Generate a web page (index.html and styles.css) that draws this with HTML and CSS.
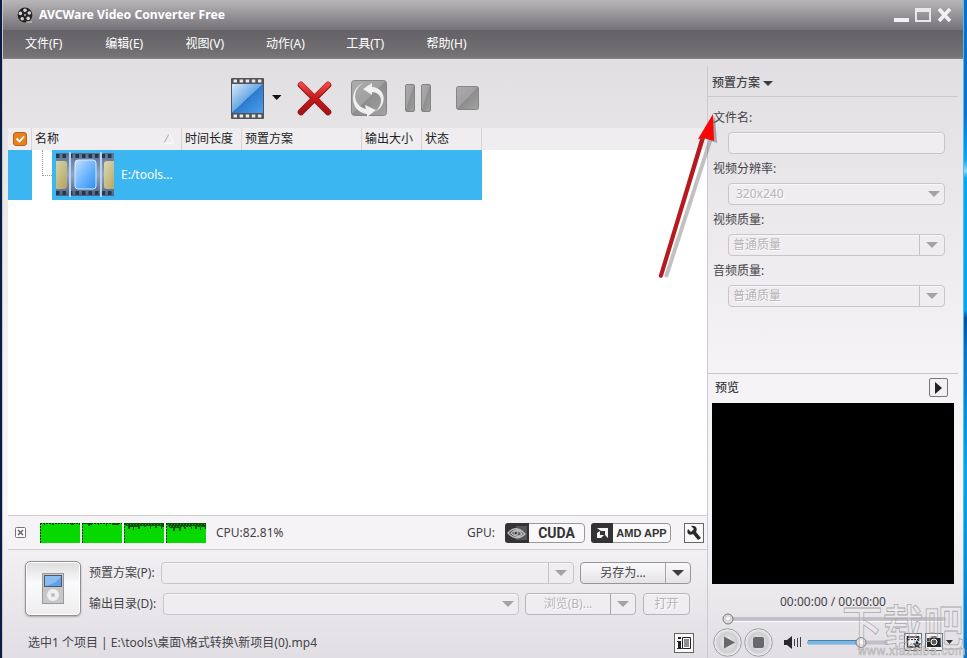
FILE: index.html
```html
<!DOCTYPE html>
<html lang="zh-CN">
<head>
<meta charset="utf-8">
<title>AVCWare Video Converter Free</title>
<link rel="stylesheet" href="styles.css">
</head>
<body>
<div class="window">
  <header class="titlebar">
    <svg class="logo" width="16" height="16" viewBox="0 0 16 16"><circle cx="8" cy="8" r="7.4" fill="#232323"/><g fill="#d4d4d4"><circle cx="8" cy="3.2" r="1.8"/><circle cx="12.3" cy="6" r="1.8"/><circle cx="11.2" cy="11.4" r="1.8"/><circle cx="5.2" cy="11.7" r="1.8"/><circle cx="3.4" cy="6.4" r="1.8"/></g><circle cx="8" cy="8" r="1.2" fill="#999"/><path d="M9 15h6" stroke="#ccc"/></svg>
    <h1>AVCWare Video Converter Free</h1>
    <svg class="winbtns" width="60" height="18" viewBox="0 0 60 18"><path fill="#f2f2f2" d="M1 12h15v4H1z"/><path d="M22 2h16v14H22zM24 6v8h12V6z" fill="#e9e9e9" fill-rule="evenodd"/><path d="M46 3l11 12M57 3L46 15" stroke="#f2f2f2" stroke-width="3.6"/></svg>
  </header>
  <nav class="menu"><span>文件(F)</span><span>编辑(E)</span><span>视图(V)</span><span>动作(A)</span><span>工具(T)</span><span>帮助(H)</span></nav>
  <div class="content">
    <main class="main">
      <div class="toolbar">
        <svg width="252" height="44" viewBox="0 0 252 44">
          <defs>
            <linearGradient id="film" x2="1" y2="1"><stop stop-color="#d6e9fa"/><stop offset=".49" stop-color="#6aa9e4"/><stop offset=".5" stop-color="#2c7ad0"/><stop offset="1" stop-color="#4da0ec"/></linearGradient>
            <linearGradient id="red" x2="0" y2="1"><stop stop-color="#ed4545"/><stop offset=".5" stop-color="#c41a1d"/><stop offset="1" stop-color="#a81417"/></linearGradient>
            <linearGradient id="grey" x2="1" y2="1"><stop stop-color="#acacad"/><stop offset=".49" stop-color="#a0a0a1"/><stop offset=".5" stop-color="#8d8d8e"/><stop offset="1" stop-color="#a3a3a4"/></linearGradient>
          </defs>
          <rect x="1" y="2" width="33" height="41" rx="1" fill="#515358"/>
          <rect x="2" y="8" width="31" height="29" fill="url(#film)"/>
          <path d="M3.5 5h29M3.5 40h29" stroke="#e8e8e8" stroke-width="3" stroke-dasharray="3.5 2.6"/>
          <path d="M42 19h9.500l-4.800 5z" fill="#111"/>
          <path d="M71 9l27 27M98 9L71 36" stroke="#8d1619" stroke-width="6.600" stroke-linecap="round"/>
          <path d="M71 8.500l27 27M98 8.500L71 35.500" stroke="url(#red)" stroke-width="5.200" stroke-linecap="round"/>
          <rect x="121.500" y="4.500" width="35" height="35" rx="3" fill="url(#grey)" stroke="#858586"/>
          <path d="M134 8C121 14 123 31 136 34l-1-4 11 5-9 7 0-3C119 37 119 12 134 8z" transform="translate(0 -1)" fill="#f0f0f2"/>
          <path d="M145 36c13-7 11-24-3-25v-4l-9 6 9 6v-3c11 1 12 12 3 20z" fill="#f0f0f2"/>
          <g fill="url(#grey)" stroke="#858586"><rect x="175.500" y="8.500" width="9" height="27" rx="1.500"/><rect x="191.500" y="8.500" width="9" height="27" rx="1.500"/><rect x="226.500" y="10.500" width="22" height="23" rx="2"/></g>
        </svg>
      </div>
      <div class="thead"><span class="c-check"><svg width="14" height="14" viewBox="0 0 14 14"><rect x=".5" y=".5" width="13" height="13" rx="2.500" fill="#e6811f" stroke="#bd6013"/><path d="M3.500 6.500l3 3 4.500-5" fill="none" stroke="#fff" stroke-width="1.800"/></svg></span><span class="c-name">名称<svg width="12" height="11" viewBox="0 0 12 11"><path d="M1 10L6 1" stroke="#aaa"/><path d="M6 1l5 9H1" fill="none" stroke="#fff"/></svg></span><span class="c-time">时间长度</span><span class="c-preset">预置方案</span><span class="c-size">输出大小</span><span class="c-state">状态</span></div>
      <div class="list">
        <div class="row">
          <div class="mark"></div><div class="tree"><i></i></div>
          <div class="item">
            <svg width="58" height="45" viewBox="0 0 58 45">
              <defs><linearGradient id="strip" x2="0" y2="1"><stop stop-color="#596e8e"/><stop offset=".5" stop-color="#8ba9cc"/><stop offset="1" stop-color="#4b6284"/></linearGradient><linearGradient id="pane" x2="1" y2="1"><stop stop-color="#c6e1ff"/><stop offset=".5" stop-color="#70b6fc"/><stop offset="1" stop-color="#2b8ff3"/></linearGradient><linearGradient id="tan" x2="1" y2="1"><stop stop-color="#dad9b1"/><stop offset="1" stop-color="#b6a25b"/></linearGradient></defs>
              <path fill="url(#strip)" d="M0 1h58v43H0z"/>
              <path d="M0 4h58M0 41h58" stroke="#26354d" stroke-width="4" stroke-dasharray="3.500 3"/>
              <path d="M-3 9H8q3 0 3 3v22q0 3-3 3h-11z" fill="url(#tan)"/><path d="M61 9H51q-3 0-3 3v22q0 3 3 3h10z" fill="url(#tan)"/>
              <path d="M14 0v45M45 0v45" stroke="#bed1e7" stroke-width="2"/>
              <rect x="19" y="8" width="21" height="29" rx="3" fill="url(#pane)" stroke="#d7eaff"/>
            </svg>
            <span>E:/tools...</span>
          </div>
        </div>
      </div>
      <div class="cpu">
        <svg class="closebox" width="11" height="11" viewBox="0 0 11 11"><rect x=".5" y=".5" width="10" height="10" rx="1" fill="#fafafa" stroke="#777"/><path d="M3 3l5 5M8 3L3 8" stroke="#666" stroke-width="1.500"/></svg>
        <svg class="graphs" width="166" height="20" viewBox="0 0 166 20">
          <defs><g id="tile"><rect width="40" height="20" fill="#06d900"/><path d="M.5 0v20" stroke="#073907" stroke-dasharray="2 1"/><path d="M0 .5h40" stroke="#063b05" stroke-dasharray="2 1"/></g></defs>
          <use href="#tile"/><use href="#tile" x="42"/><use href="#tile" x="84"/><use href="#tile" x="126"/>
          <path fill="#075007" d="M4 0v2h1V0zM12 0v2h2V0zM31 0v2h3V0zM39 0v2h1V0zM42 0h10v2h-2v1h-2V1h-6zM58 0v2h1V0zM66 0v3h1V0zM72 0v2h7V0zM84 0h40v4h-2v2h-1V3h-4v2h-2V3h-4v3h-1V3h-4v1h-2V3h-4v3h-2V4h-4v3h-1V4h-3v2h-2V3h-2zM126 0h40v6h-1V4h-4v3h-1V4h-3v2h-2V3h-3v3h-1V4h-5v2h-2V4h-3v4h-2V5h-4v3h-2V5h-3z"/>
          <path d="M87 1.500h36M128 1.500h37M127 3.500h36" stroke="#05ac02" stroke-dasharray="1 2"/>
        </svg>
        <span class="cputext">CPU:82.81%</span><span class="gpu">GPU:</span>
        <span class="badge cuda"><svg width="24" height="20" viewBox="0 0 24 20"><path d="M3 0h21v20H3q-3 0-3-3V3q0-3 3-3z" fill="#333335"/><path d="M11 3h11v14H11z" fill="#555558"/><path d="M3 10q8-9 17 1-8 8-17-1zM6 10q6-6 11 1-5 5-11-1z" fill="none" stroke="#bbb" stroke-width="1.300"/><circle cx="11" cy="10" r="2" fill="none" stroke="#ccc"/></svg><b>CUDA</b></span>
        <span class="badge amd"><svg width="22" height="20" viewBox="0 0 22 20"><path d="M3 0h19v20H3q-3 0-3-3V3q0-3 3-3z" fill="#333335"/><path d="M6 5h11v10l-3-3V8h-4zM6 10l3-2v4h4l-3 3H6z" fill="#f5f5f5"/></svg><b>AMD APP</b></span>
        <span class="sq wrench"><svg width="18" height="18" viewBox="0 0 18 18"><path d="M6 2c5-1 7 3 5 6l5 6-3 2-5-6C4 12 1 9 3 5l3 3 3-3z" fill="#292929"/></svg></span>
      </div>
      <div class="output">
        <div class="device"><svg width="22" height="31" viewBox="0 0 22 31"><rect x=".5" y=".5" width="21" height="30" fill="#c5c7ca" stroke="#999"/><rect x="2.500" y="2.500" width="17" height="11" fill="#8abbf2" stroke="#4c596d"/><path d="M3 13q9-1 16-9v9z" fill="#60a1e8"/><circle cx="11" cy="22" r="6" fill="#f0f0f0"/><circle cx="11" cy="22" r="2" fill="#bbb"/></svg></div>
        <div class="fields">
          <div class="line"><label>预置方案(P):</label><div class="combo profile disabled"><span></span><em><i class="caret"></i></em></div><div class="btn saveas"><span>另存为...</span><em><i class="caret"></i></em></div></div>
          <div class="line"><label>输出目录(D):</label><div class="combo dest disabled"><span></span><i class="caret"></i></div><div class="btn browse disabled"><span>浏览(B)...</span><em><i class="caret"></i></em></div><div class="btn open disabled"><span>打开</span></div></div>
        </div>
      </div>
      <footer class="status"><span>选中1 个项目 | E:\tools\桌面\格式转换\新项目(0).mp4</span><b class="sq"><svg width="18" height="18" viewBox="0 0 18 18"><path d="M3 3h3v2H3zM2 7h4v7h1v1H2v-1h1V8H2z" fill="#222"/><path d="M7.500 3.500h8v11h-8zM9 6h5M9 8h5M9 10h5M9 12h5" fill="none" stroke="#222"/></svg></b></footer>
    </main>
    <aside class="side">
      <section class="preset">
        <h2>预置方案<i class="caret"></i></h2>
        <label>文件名:</label><div class="combo"></div>
        <label>视频分辨率:</label><div class="combo disabled res"><span>320x240</span><i class="caret"></i></div>
        <label>视频质量:</label><div class="combo disabled"><span>普通质量</span><em><i class="caret"></i></em></div>
        <label>音频质量:</label><div class="combo disabled"><span>普通质量</span><em><i class="caret"></i></em></div>
      </section>
      <section class="preview">
        <h2>预览<b><svg width="7" height="12" viewBox="0 0 7 12"><path d="M0 0l7 6-7 6z" fill="#222"/></svg></b></h2>
        <div class="screen"></div>
        <div class="time">00:00:00 / 00:00:00</div>
        <svg class="player" width="255" height="48" viewBox="0 0 255 48">
          <defs><radialGradient id="steel"><stop stop-color="#eee"/><stop offset=".7" stop-color="#cecdd0"/><stop offset="1" stop-color="#f3f3f4"/></radialGradient></defs>
          <path d="M20 9h216" stroke="#c2bfca" stroke-width="4" stroke-linecap="round"/><path d="M20 11.500h216" stroke="#fff"/>
          <circle cx="20" cy="9" r="5" fill="#ddd" stroke="#777"/><circle cx="20" cy="8.500" r="2.500" fill="#fafafa" stroke="#aaa" stroke-width=".5"/>
          <g fill="url(#steel)" stroke="#9d9da0"><circle cx="19.500" cy="32.500" r="13.800"/><circle cx="50.500" cy="32.500" r="13.800"/></g>
          <path d="M16 26.500l11 6-11 6z" fill="#68686c"/><rect x="45" y="27" width="11" height="11" rx="2" fill="#68686c"/>
          <path d="M76 30h3l5-4v13l-5-4h-3z" fill="#29292b"/><path d="M86.500 29v7M89.500 28v9M92.500 27v10" stroke="#444" stroke-width="1"/>
          <path d="M101 32.500h77" stroke="#c2bfca" stroke-width="4" stroke-linecap="round"/><path d="M101 32.500h52" stroke="#78b8e6" stroke-width="4" stroke-linecap="round"/><path d="M100 30.500h52" stroke="#507f9f"/>
          <circle cx="153" cy="32.500" r="5" fill="#ddd" stroke="#777"/><circle cx="153" cy="32" r="2.500" fill="#fafafa"/>
          <g fill="#f4f3f4" stroke="#69696b"><rect x="196.500" y="23.500" width="17" height="17"/><rect x="217.500" y="23.500" width="17" height="17"/></g>
          <path d="M199 27h12M199 37h7M199.500 26v12M210.500 26v5" stroke="#222" fill="none" stroke-width="1.500"/><path d="M200 29.500h10" stroke="#222" stroke-dasharray="2 1"/><path d="M209 30l1.500 3 3 .5-2.300 2 .8 3-3-1.500-3 1.500.8-3-2.300-2 3-.5z" fill="#222"/>
          <path d="M219 28h4l1-2h4l1 2h4v9h-14z" fill="#252525"/><circle cx="226" cy="32" r="3" fill="#555" stroke="#fff"/><path d="M238 30h7l-3.500 4z" fill="#333"/>
        </svg>
      </section>
    </aside>
  </div>
</div>
<div class="desktop-edge"></div>
<svg class="arrow" width="70" height="175" viewBox="0 0 70 175"><path d="M14 171L59 32" stroke="#777" opacity=".45" stroke-width="4"/><path d="M9 172q-3-1-2-3L49 30l4 2-42 138q-1 2-2 2z" fill="#b71a1e"/><path d="M61 9L45 32l7-1 11 4z" transform="translate(2 2)" fill="#666" opacity=".5"/><path d="M61 8L46 33l6-1 10 3z" fill="#fb0505"/></svg>
<svg class="watermark" width="130" height="60" viewBox="0 0 130 60"><text x="4" y="47" textLength="122" lengthAdjust="spacingAndGlyphs" class="mark-big">下载吧</text><text x="20" y="57" textLength="107" class="mark-url">www.xiazaiba.com</text></svg>
</body>
</html>
```
FILE: styles.css
```css
* { box-sizing: border-box; }
body { margin: 0; width: 967px; height: 658px; overflow: hidden; display: flex; position: relative; background: #071f43; font: 12px/16px "Noto Sans", "Noto Sans CJK SC", sans-serif; color: #444448; }
svg { display: block; flex: none; }
i, em { font-style: normal; }
h1, h2 { margin: 0; }
.window { width: 961px; margin-left: 2px; border-left: 1px solid #c7c8ca; display: flex; flex-direction: column; background: #f4f2f4; }
.desktop-edge { width: 4px; border-left: 1px solid #64b5df; background: linear-gradient(#0870cd 0 59px, #0874d5 115px, #06a8fa 160px, #8fdcff 171px, #06a6f7 178px 310px, #0452a1 318px, #0874cc 350px, #08a6ef 470px, #0977c6); }
.titlebar { height: 30px; display: flex; align-items: center; padding: 0 10px 0 14px; background: linear-gradient(#b8b6b9, #747276); color: #fff; }
.titlebar h1 { font: bold 12.2px/18px "Noto Sans"; margin-left: 6px; width: 210px; white-space: nowrap; }
.winbtns { margin-left: auto; }
.menu { height: 29px; padding-left: 22px; display: flex; align-items: center; background: linear-gradient(#656267, #706e71 75%, #777578); border-bottom: 1px solid #858386; color: #fff; }
.menu span { width: 80.3px; }
.content { display: flex; height: 599px; background: linear-gradient(#e1dfe2, #f4f2f5 50%, #f8f6f8 75%, #e1dfe3); }
.main { width: 704px; padding-left: 5px; display: flex; flex-direction: column; }
.toolbar { height: 69px; padding: 17px 0 0 222px; }
.thead { height: 22px; display: flex; background: #efedf0; color: #222; line-height: 21px; }
.thead span { border-right: 1px solid #dbd2d2; padding-left: 3px; white-space: nowrap; }
.thead .c-check { width: 24px; padding: 4px 0 0 5px; }
.c-name { width: 150px; display: flex; justify-content: space-between; padding-right: 6px; align-items: center; }
.c-time { width: 60px; }
.c-preset { width: 120px; }
.c-size { width: 60px; }
.c-state { width: 60px; }
.list { height: 366px; background: #fff; }
.row { display: flex; height: 50px; width: 474px; }
.mark { width: 24px; background: #3cb6f1; }
.tree { width: 20px; padding-left: 10px; }
.tree i { display: block; height: 26px; border: dotted #999; border-width: 0 0 1px 1px; }
.item { flex: 1; background: #3cb6f1; display: flex; align-items: center; padding-left: 4px; color: #fff; gap: 7px; }
.cpu { height: 35px; border: solid #cfcdd0; border-width: 1px 0; display: flex; align-items: center; padding-left: 7px; background: #f5f3f5; }
.graphs { margin-left: 14px; }
.cputext { margin-left: 10px; width: 251px; }
.gpu { width: 38px; }
.badge { height: 20px; width: 80px; display: flex; border: 1px solid #98979a; border-radius: 4px; background: #faf9fa; }
.badge svg { margin: -1px 0 0 -1px; }
.badge b { flex: 1; text-align: center; font: bold 14px/19px Roboto; color: #333; }
.amd { margin-left: 6px; }
.amd b { font: bold 11px/18px "Liberation Sans"; white-space: nowrap; }
.sq { width: 20px; height: 20px; border: 1px solid #666; background: #fafafa; display: block; }
.wrench { margin-left: 13px; }
.output { height: 78px; padding: 11px 0 0 17px; display: flex; }
.device { width: 56px; height: 55px; border: 1px solid #8f8d91; border-radius: 5px; background: linear-gradient(#ddd, #fbfafc 40%, #eee); box-shadow: 0 1px 2px #aaa, inset 0 0 0 1px #fff; display: grid; place-items: center; }
.fields { margin-left: 8px; padding-top: 1px; }
.line { display: flex; height: 22px; margin-bottom: 9px; align-items: center; }
.line label { width: 72px; white-space: nowrap; }
.line:nth-child(2) label { width: 74px; }
.combo, .btn { height: 22px; border: 1px solid #c8c6ca; border-radius: 4px; background: #efedef; display: flex; align-items: center; justify-content: space-between; box-shadow: inset 0 1px #f9f7f9; }
.btn { border-color: #98969a; background: linear-gradient(#f9f8fa, #e5e3e6); }
.btn span { flex: 1; text-align: center; white-space: nowrap; }
.btn.disabled { border-color: #b7b5b9; background: #efedef; }
.disabled { color: #b5b3b7; text-shadow: 1px 1px #fff; }
.caret { display: block; border: 6px solid transparent; border-top-color: #3e3c40; border-bottom: 0; }
.disabled .caret { border-top-color: #a4a2a5; }
.combo em, .btn em { border-left: 1px solid #c4c2c6; height: 20px; width: 25px; display: grid; place-items: center; }
.btn em { border-color: #a8a6aa; }
.profile { width: 413px; margin-right: 6px; }
.saveas { width: 111px; }
.dest { width: 356px; padding-right: 4px; margin-right: 6px; }
.browse { width: 111px; margin-right: 7px; }
.open { width: 47px; }
.status { height: 29px; padding: 0 13px 2px 20px; display: flex; align-items: center; justify-content: space-between; margin-top: 1px; }
.status span { padding-top: 1px; }
.side { width: 256px; border-left: 1px solid #cccacf; margin-top: 7px; flex: none; padding-left: 0; }
.preset { height: 308px; width: 250px; border-bottom: 1px solid #c8c6cb; }
.side h2 { font: bold 12px/32px "Noto Sans", "Noto Sans CJK SC", sans-serif; font-weight: 500; height: 31px; padding-left: 4px; display: flex; align-items: center; }
.preset h2 { border-bottom: 1px solid #cac8cc; padding-top: 4px; }
.preset h2 .caret { margin-left: 3px; border-width: 5px; border-bottom-width: 0; }
.preset label { display: block; height: 29px; line-height: 30px; padding-left: 5px; }
.preset h2 + label { height: 35px; line-height: 42px; }
.preset .combo { width: 217px; margin-left: 20px; padding-left: 4px; }
.preset .res { padding: 0 4px 0 7px; }
.preview h2 { height: 29px; padding: 0 15px 2px 7px; justify-content: space-between; }
.preview h2 b { width: 19px; height: 19px; border: 1px solid #777; border-radius: 2px; background: #f2f0f2; display: grid; place-items: center; }
.screen { width: 242px; height: 181px; margin-left: 4px; background: #000; }
.time { height: 26px; padding: 10px 0 0 72px; white-space: nowrap; }
.arrow { position: absolute; left: 652px; top: 106px; }
.watermark { position: absolute; left: 838px; top: 598px; }
.mark-big { font: 500 48px "Noto Sans CJK SC"; fill: #fff; fill-opacity: .15; stroke: #aaa8ac; stroke-width: .8; }
.mark-url { font: 12px "Liberation Sans"; fill: #e8e6e8; stroke: #aaa; stroke-width: .5; }
```
